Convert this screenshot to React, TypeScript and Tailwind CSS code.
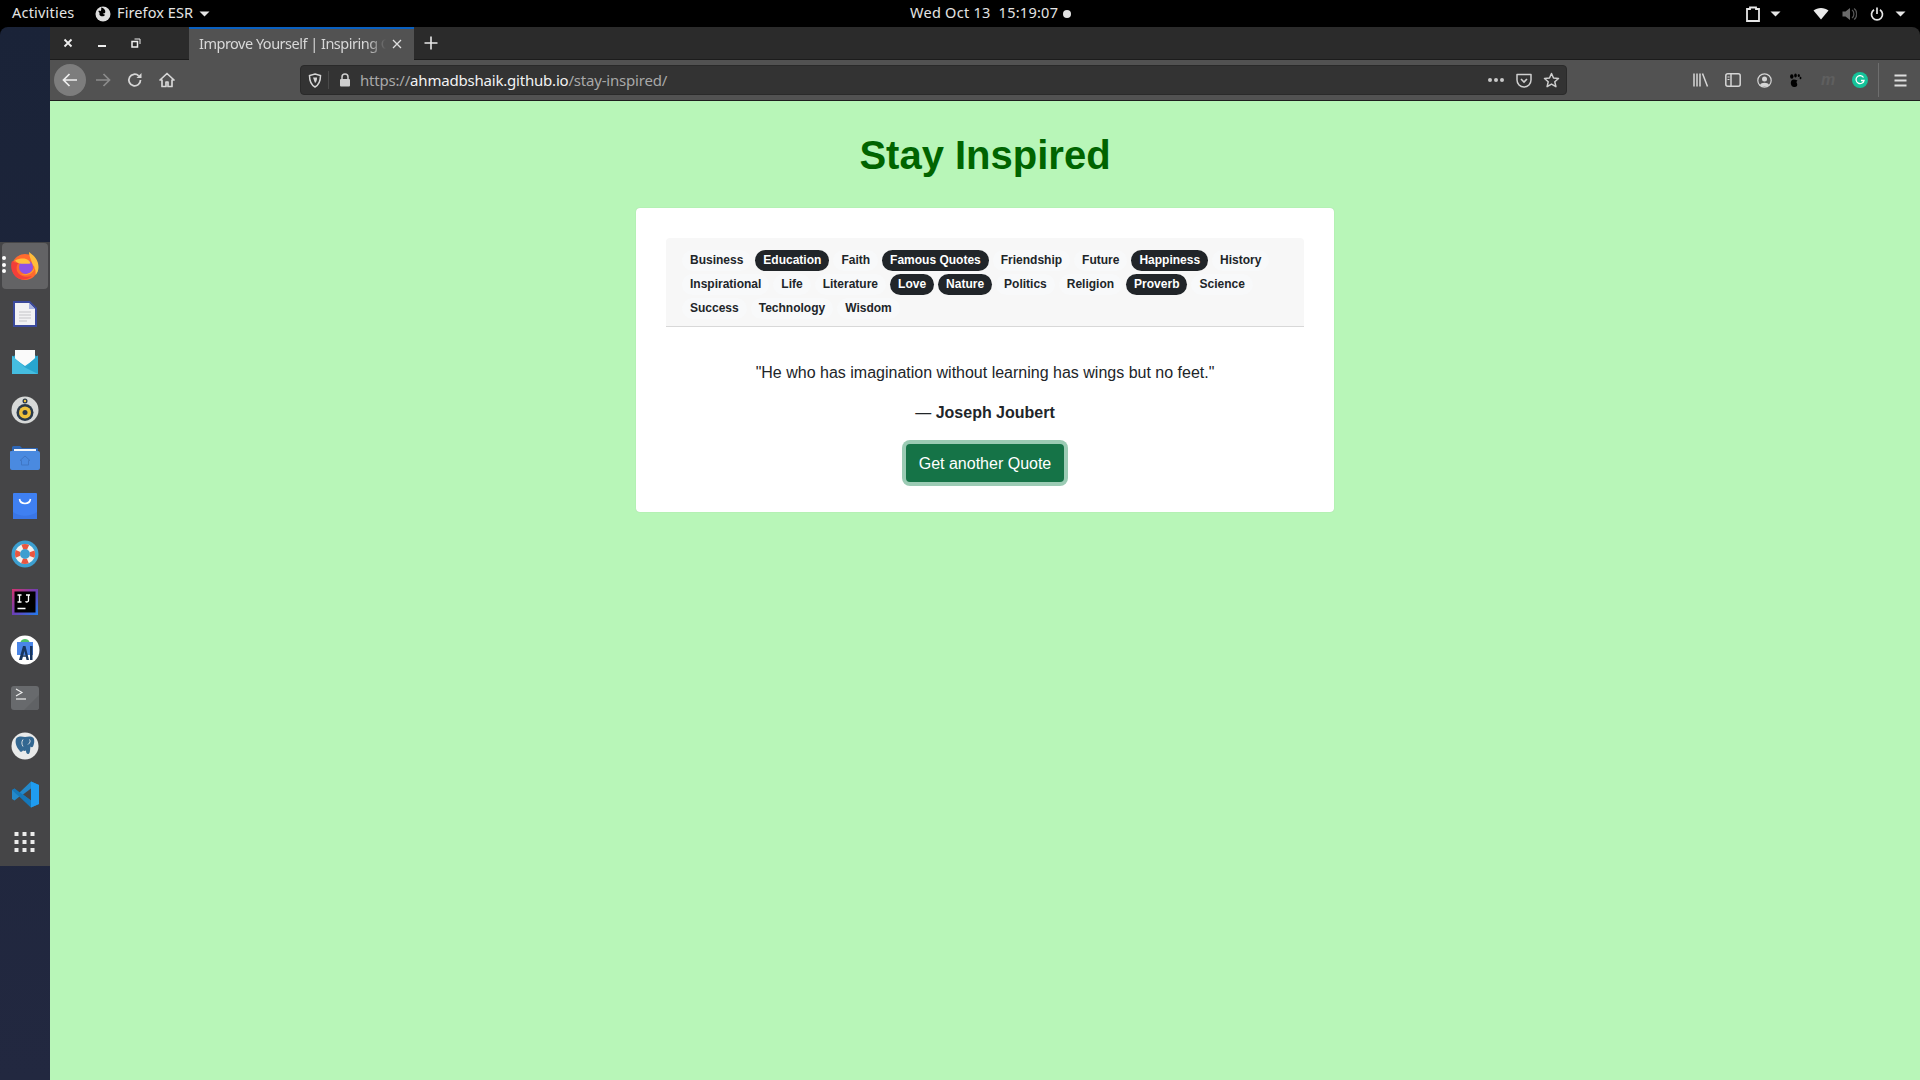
import React from "react";

const cats: [string, boolean][] = [
  ["Business", false], ["Education", true], ["Faith", false], ["Famous Quotes", true], ["Friendship", false], ["Future", false], ["Happiness", true], ["History", false],
  ["Inspirational", false], ["Life", false], ["Literature", false], ["Love", true], ["Nature", true], ["Politics", false], ["Religion", false], ["Proverb", true], ["Science", false],
  ["Success", false], ["Technology", false], ["Wisdom", false],
];

const Caret = () => (
  <svg width="11" height="6" viewBox="0 0 11 6"><path d="M0.5 0.5h10L5.5 5.5z" fill="#e6e6e6" /></svg>
);

function TopBar() {
  return (
    <div className="h-[27px] bg-black flex items-center text-[#e4e4e4] text-[14.5px] relative font-['Noto_Sans',sans-serif] tracking-[0.1px]">
      <span className="ml-3 w-[83px] pb-[1px] tracking-[0.2px]">Activities</span>
      <svg width="16" height="16" viewBox="0 0 16 16" className="mr-[6px]">
        <circle cx="8" cy="8" r="7.5" fill="#dedede" />
        <path d="M6 1.5c3 .5 4.5 2.4 4.3 4.4-.2 1.5-1.3 1.6-2.6 1.6 1 .8 1.6 1.2 2.3 1.2-.6 1.4-2.2 2-3.6 1.5C4.600 10 4 8.500 4.600 7 4 6.500 3.500 5.800 3.300 5c1-.2 1.800-.2 2.400.2C6.300 3.800 6.500 2.500 6 1.500z" fill="#000" />
      </svg>
      <span className="pb-[1px]">Firefox ESR</span>
      <span className="ml-[6px] flex"><Caret /></span>
      <div className="absolute left-[910px] top-0 h-[27px] flex items-center">
        <span className="whitespace-pre tracking-[0.26px] pb-[1px]">Wed Oct 13  15:19:07</span>
        <span className="ml-[5px] w-[8px] h-[8px] rounded-full bg-[#e4e4e4]" />
      </div>
      <div className="ml-auto flex items-center">
        <svg width="14" height="16" viewBox="0 0 14 16" className="mr-[10px]"><path d="M1 3h3V1.500h6V3h3v12H1z" fill="none" stroke="#e6e6e6" strokeWidth="1.800" /></svg>
        <Caret />
        <svg width="16" height="13" viewBox="0 0 16 13" className="ml-[32px]"><path d="M0.500 3.500C4.500 0 11.500 0 15.500 3.500L8 12.500z" fill="#eaeaea" /></svg>
        <svg width="15" height="14" viewBox="0 0 15 14" className="ml-[13px]"><path d="M0.500 4.500h3L8 1v12L3.500 9.500h-3z" fill="#6a6a6a" /><path d="M10 3c2.500 1.500 2.500 6.500 0 8M12 1.500c3.500 2 3.500 9 0 11" fill="none" stroke="#555" strokeWidth="1.300" /></svg>
        <svg width="14" height="14" viewBox="0 0 14 14" className="ml-[13px]"><path d="M4 2.800a5.500 5.500 0 1 0 6 0" fill="none" stroke="#e6e6e6" strokeWidth="1.700" /><path d="M7 0.500v6.500" stroke="#e6e6e6" strokeWidth="1.700" /></svg>
        <span className="ml-[11px] mr-[14px] flex"><Caret /></span>
      </div>
    </div>
  );
}

function DockItem({ children, active }: { children: React.ReactNode; active?: boolean }) {
  return (
    <div className={`w-[46px] h-[46px] mx-[2px] my-[1px] rounded-[4px] flex items-center justify-center relative shrink-0 ${active ? "bg-[#636365]" : ""}`}>
      {children}
    </div>
  );
}

function Dock() {
  return (
    <div className="w-[50px] shrink-0 bg-[#1b2238] rounded-tl-[8px] bg-gradient-to-b from-[#1a2338] to-[#222840] pt-[215px]">
      <div className="bg-[#454547] h-[624px] flex flex-col overflow-hidden">
        <DockItem active>
          <div className="absolute left-[0px] top-[13px] flex flex-col gap-[2.500px]">
            <span className="w-[4px] h-[4px] rounded-full bg-white" />
            <span className="w-[4px] h-[4px] rounded-full bg-white" />
            <span className="w-[4px] h-[4px] rounded-full bg-white" />
          </div>
          <svg width="28" height="28" viewBox="0 0 28 28">
            <circle cx="14" cy="15" r="13" fill="#ff6a2e" />
            <path d="M18 0c5 3.500 9.500 8 9.500 15 0 3-1 6-3 8 .5-4-.5-8-3-10.500C20.500 8 18 5 18 0z" fill="#ffbd3c" />
            <path d="M1 9c-2 5-.5 11 3 15 4 4 12 5 17 0-6 2-13 0-15-5-1-4 0-7 2-8-3 0-5-1-7-2z" fill="#f23f3a" />
            <circle cx="15" cy="15" r="7" fill="#8f52e6" />
            <path d="M4 8.500c4-2 8-2.500 11-1.500 2.500.8 4 2.500 4.500 4.500-3 .5-6 .2-9 .2-3 0-5-1.200-6.500-3.200z" fill="#ffc13c" />
            <path d="M9 22c3 1.500 7 1.500 10 0 3-1.500 5-4.500 5-8-1.500 4-4 7-7.500 7.800-2.700.7-5.500.7-7.500.2z" fill="#ffa02e" />
          </svg>
        </DockItem>
        <DockItem>
          <svg width="24" height="26" viewBox="0 0 24 26">
            <path d="M0 0h17l7 7v19H0z" fill="#3b4a9c" />
            <path d="M2 2h14l6 6v16H2z" fill="#f2f2f4" />
            <path d="M16 2l6 6h-6z" fill="#a9b4e2" />
            <path d="M6 11h12M6 14h12M6 17h12M6 20h8" stroke="#c4c4c8" strokeWidth="1.200" />
          </svg>
        </DockItem>
        <DockItem>
          <svg width="26" height="24" viewBox="0 0 26 24">
            <path d="M0 7l13-7 13 7v17H0z" fill="#2ba8d2" />
            <path d="M3 0h20v9l-10 7L3 9z" fill="#fafafa" />
            <path d="M0 5.500l13 12 13-12V24H0z" fill="#45bde0" />
            <path d="M26 5.500V24L13 17.500z" fill="#28a6cf" />
          </svg>
        </DockItem>
        <DockItem>
          <svg width="28" height="28" viewBox="0 0 28 28">
            <circle cx="14" cy="14" r="13.500" fill="#d7d9d8" />
            <circle cx="14" cy="5" r="2.500" fill="#2b3a4a" />
            <circle cx="14" cy="5" r="1.200" fill="#f0c33c" />
            <circle cx="14" cy="16.500" r="8.500" fill="#2b3a4a" />
            <circle cx="14" cy="16.500" r="6" fill="#efc13a" />
            <circle cx="14" cy="16.500" r="2.500" fill="#2b3a4a" />
          </svg>
        </DockItem>
        <DockItem>
          <svg width="30" height="24" viewBox="0 0 30 24">
            <path d="M2 1.500a1.500 1.500 0 0 1 1.500-1.500H10l2 2h15a1 1 0 0 1 1 1v6H2z" fill="#2e66b5" />
            <path d="M4 3h22v5H4z" fill="#f4f6f9" />
            <path d="M1 5h27a2 2 0 0 1 2 2v15a2 2 0 0 1-2 2H2a2 2 0 0 1-2-2V6a1 1 0 0 1 1-1z" fill="#4a8ae0" />
            <path d="M15 10l5 4.500h-1.500V19h-7v-4.500H10z" fill="none" stroke="#3f76c4" strokeWidth="1" />
          </svg>
        </DockItem>
        <DockItem>
          <svg width="24" height="26" viewBox="0 0 24 26">
            <rect width="24" height="26" rx="1" fill="#3f80f2" />
            <path d="M0 19c8 5 16 5 24 0v7H0z" fill="#3a76e6" />
            <path d="M6.500 6c1 6 10 6 11 0" fill="none" stroke="#fff" strokeWidth="1.600" />
          </svg>
        </DockItem>
        <DockItem>
          <svg width="28" height="28" viewBox="0 0 28 28">
            <circle cx="14" cy="14" r="13.500" fill="#3d9fd0" />
            <circle cx="14" cy="14" r="7.500" fill="none" stroke="#f4f2ee" strokeWidth="5" />
            <circle cx="14" cy="14" r="7.500" fill="none" stroke="#e9563f" strokeWidth="5" strokeDasharray="5.900 5.900" strokeDashoffset="3" />
          </svg>
        </DockItem>
        <DockItem>
          <svg width="26" height="26" viewBox="0 0 26 26">
            <defs>
              <linearGradient id="ij" x1="0" y1="0" x2="1" y2="1">
                <stop offset="0" stopColor="#d6336c" />
                <stop offset="0.500" stopColor="#6b3fb5" />
                <stop offset="1" stopColor="#1f7ef0" />
              </linearGradient>
            </defs>
            <rect width="26" height="26" fill="url(#ij)" />
            <rect x="2.500" y="2.500" width="21" height="21" fill="#000" />
            <path d="M5.500 6h4M7.500 6v7M5.500 13h4M14 6h4M16.500 6v5.500c0 1.500-2 2-3 .8M5.500 19.500h8" fill="none" stroke="#fff" strokeWidth="1.300" />
          </svg>
        </DockItem>
        <DockItem>
          <svg width="30" height="30" viewBox="0 0 30 30">
            <circle cx="15" cy="15" r="14.500" fill="#fff" />
            <path d="M7 7h16v13H7z" fill="#4a86e8" />
            <path d="M10.500 7c1-4 8-4 9 0z" fill="#4fc26a" />
            <path d="M9 25l4-14h2.500l3.500 14h-2.500l-2-9-2.500 9zM20 11h2.500v14H20z" fill="#17355f" />
            <path d="M11.500 21h5.500" stroke="#17355f" strokeWidth="1.500" />
          </svg>
        </DockItem>
        <DockItem>
          <svg width="28" height="24" viewBox="0 0 28 24">
            <rect width="28" height="24" rx="3" fill="#686a6d" />
            <path d="M28 9v12a3 3 0 0 1-3 3H13z" fill="#606265" />
            <path d="M5 3l6 3.500-6 3.500" fill="none" stroke="#f0f0f0" strokeWidth="1.100" />
            <path d="M5 13h10" stroke="#f0f0f0" strokeWidth="1.200" />
          </svg>
        </DockItem>
        <DockItem>
          <svg width="28" height="28" viewBox="0 0 28 28">
            <circle cx="14" cy="14" r="13.500" fill="#e9eaea" />
            <path d="M5.500 6c3-2.500 6-1.500 8.500-1 2.500-.5 6-1.500 8.500 1 1.500 2.500.5 6.500-.5 8.500-.5 1-2 1-2.500 0-.5 2.500 0 6.500-2 7.500-1.500.5-2.500-1-2.500-3.500-1 .5-2 .5-3 0-1 1-2.500 2.500-3.500 0C5 15 3.500 9 5.500 6z" fill="#336791" />
            <path d="M12 7.500c-1.500 2-1.500 4.500 0 7M18.500 7.500c1 1.500 1 3-1.500 5" fill="none" stroke="#e9eaea" strokeWidth="0.900" />
          </svg>
        </DockItem>
        <DockItem>
          <svg width="27" height="27" viewBox="0 0 27 27">
            <path d="M19 0.500L27 4v19l-8 3.500L7.500 15.500 2.500 19.500 0 18V9l2.500-1.500 5 4z" fill="#2489ca" />
            <path d="M19 0.500L27 4v19l-8 3.500z" fill="#1f9cf0" />
            <path d="M19 7.500v12l-8-6z" fill="#454547" />
            <path d="M0 9l2.500-1.500L19 19.500v7L0 9z" fill="#1070b3" opacity="0.700" />
          </svg>
        </DockItem>
        <DockItem>
          <div className="grid grid-cols-3 gap-[4px] -translate-x-[0.5px]">
            {Array.from({ length: 9 }).map((_, i) => (
              <span key={i} className="w-[4px] h-[4px] bg-[#ececec]" />
            ))}
          </div>
        </DockItem>
      </div>
    </div>
  );
}

function TabBar() {
  return (
    <div className="h-[33px] bg-[#2b2b2b] rounded-tr-[8px] flex items-stretch border-b border-[#1c1c1c] font-['Noto_Sans',sans-serif]">
      <div className="w-[139px] flex items-center text-[#eee] shrink-0">
        <svg width="10" height="10" viewBox="0 0 10 10" className="ml-[13px]"><path d="M1.500 1.500l7 7M8.500 1.500l-7 7" stroke="#eee" strokeWidth="1.800" /></svg>
        <svg width="8" height="10" viewBox="0 0 8 10" className="ml-[25px]"><path d="M0 8h8" stroke="#eee" strokeWidth="2" /></svg>
        <svg width="10" height="10" viewBox="0 0 10 10" className="ml-[25px]"><path d="M1 3.500h5.500V9H1z" fill="none" stroke="#eee" strokeWidth="1.500" /><path d="M3.500 1h5.500v5" fill="none" stroke="#eee" strokeWidth="1" /></svg>
      </div>
      <div className="w-[225px] bg-[#525252] border-t-2 border-[#0a60c0] flex items-center relative shrink-0 -mb-[1px]">
        <span className="ml-[10px] w-[187px] pb-[2px] overflow-hidden whitespace-nowrap text-[14.500px] text-[#d8d8d8] tracking-[-0.5px] [mask-image:linear-gradient(to_right,black_168px,transparent_187px)]">Improve Yourself | Inspiring Quotes</span>
        <svg width="10" height="10" viewBox="0 0 10 10" className="ml-[6px] mb-[1px]"><path d="M1 1l8 8M9 1l-8 8" stroke="#e0e0e0" strokeWidth="1.300" /></svg>
      </div>
      <div className="flex items-center ml-[10px]">
        <svg width="14" height="14" viewBox="0 0 14 14"><path d="M7 0.500v13M0.500 7h13" stroke="#e8e8e8" strokeWidth="1.600" /></svg>
      </div>
    </div>
  );
}

function ToolBar() {
  const c = "#d6d6d6";
  return (
    <div className="h-[40px] bg-[#525252] flex items-center border-b border-[#1e1e1e] box-content font-['Noto_Sans',sans-serif]">
      <div className="w-[32px] h-[32px] ml-[4px] rounded-full bg-[#7d7d7d] flex items-center justify-center shrink-0">
        <svg width="16" height="14" viewBox="0 0 16 14"><path d="M15 7H2M7.500 1L1.500 7l6 6" fill="none" stroke="#eee" strokeWidth="1.700" /></svg>
      </div>
      <svg width="16" height="14" viewBox="0 0 16 14" className="ml-[9px] shrink-0"><path d="M1 7h13M8.500 1l6 6-6 6" fill="none" stroke="#8c8c8c" strokeWidth="1.700" /></svg>
      <svg width="16" height="16" viewBox="0 0 16 16" className="ml-[16px] shrink-0"><path d="M13.500 8a5.800 5.800 0 1 1-1.800-4.200" fill="none" stroke={c} strokeWidth="1.800" /><path d="M14.500 1v5h-5z" fill={c} /></svg>
      <svg width="16" height="16" viewBox="0 0 16 16" className="ml-[16px] shrink-0"><path d="M8 1.500L1 8h2v6.500h4V10h2v4.500h4V8h2z" fill="none" stroke={c} strokeWidth="1.700" strokeLinejoin="round" /></svg>
      <div className="ml-[125px] w-[1267px] h-[30px] bg-[#333333] border border-[#2a2a2a] rounded-[4px] flex items-center shrink-0">
        <svg width="14" height="15" viewBox="0 0 14 15" className="ml-[7px] shrink-0"><path d="M7 1l5.500 1.500c0 5-1 9-5.500 11.500C2.500 11.500 1.500 7.500 1.500 2.500z" fill="none" stroke={c} strokeWidth="1.500" /><path d="M5 4.500h4c0 3-.6 4.500-2 5.500z" fill={c} /></svg>
        <span className="w-[1px] h-[18px] bg-[#4a4a4a] ml-[6px]" />
        <svg width="12" height="14" viewBox="0 0 12 14" className="ml-[10px] shrink-0"><path d="M3 6V4a3 3 0 0 1 6 0v2" fill="none" stroke="#cfcfcf" strokeWidth="1.500" /><rect x="1" y="6" width="10" height="7.500" rx="1" fill="#cfcfcf" /></svg>
        <span className="ml-[9px] text-[15px] tracking-[-0.2px] whitespace-nowrap text-[#a8a8a8]">https://<span className="text-[#f2f2f2]">ahmadbshaik.github.io</span>/stay-inspired/</span>
        <div className="ml-auto flex items-center shrink-0">
          <div className="flex gap-[2px] mr-[12px]">
            <span className="w-[4px] h-[4px] rounded-full bg-[#c8c8c8]" />
            <span className="w-[4px] h-[4px] rounded-full bg-[#c8c8c8]" />
            <span className="w-[4px] h-[4px] rounded-full bg-[#c8c8c8]" />
          </div>
          <svg width="16" height="15" viewBox="0 0 16 15" className="mr-[11px]"><path d="M1 1.500h14v5.500a7 7 0 0 1-14 0z" fill="none" stroke="#cfcfcf" strokeWidth="1.500" strokeLinejoin="round" /><path d="M5 6l3 3 3-3" fill="none" stroke="#cfcfcf" strokeWidth="1.600" /></svg>
          <svg width="17" height="16" viewBox="0 0 17 16" className="mr-[6px]"><path d="M8.500 1.500l2 4.500 5 .5-3.700 3.300 1.100 4.900-4.400-2.600-4.400 2.600 1.100-4.900L1.500 6.500l5-.5z" fill="none" stroke="#cfcfcf" strokeWidth="1.500" strokeLinejoin="round" /></svg>
        </div>
      </div>
      <div className="ml-auto flex items-center shrink-0">
        <svg width="16" height="14" viewBox="0 0 16 14"><path d="M1 0.500v13M4 0.500v13M7 0.500v13M9.500 0.500l5 13" fill="none" stroke={c} strokeWidth="1.500" /></svg>
        <svg width="16" height="14" viewBox="0 0 16 14" className="ml-[16px]"><rect x="0.800" y="0.800" width="14.400" height="12.400" rx="2" fill="none" stroke={c} strokeWidth="1.500" /><path d="M6 1v12" stroke={c} strokeWidth="1.500" /><path d="M2.500 4h2M2.500 6.500h2" stroke={c} strokeWidth="1.200" /></svg>
        <svg width="15" height="15" viewBox="0 0 15 15" className="ml-[16px]"><circle cx="7.500" cy="7.500" r="6.700" fill="none" stroke={c} strokeWidth="1.200" /><circle cx="7.500" cy="6" r="2.500" fill={c} /><path d="M3 12c1-3 8-3 9 0-2 2-7 2-9 0z" fill={c} /></svg>
        <svg width="13" height="15" viewBox="0 0 13 15" className="ml-[17px]"><path d="M2.500 7.500C1 10 2 13.500 5 14c2.500.4 4-1.500 3-3.500-.8-1.500-.5-2 .5-3C6 6.500 3.500 6 2.500 7.500z" fill="#000" /><ellipse cx="2.800" cy="3.500" rx="1.700" ry="2.300" fill="#000" /><ellipse cx="6.500" cy="2.500" rx="1.300" ry="1.900" fill="#000" /><ellipse cx="9.800" cy="2.500" rx="1.100" ry="1.500" fill="#000" /><ellipse cx="11.500" cy="5" rx="0.900" ry="1.200" fill="#000" /></svg>
        <span className="ml-[19px] w-[14px] text-[16px] leading-none italic font-bold text-[#5f5f5f] font-['Liberation_Sans',sans-serif]">m</span>
        <div className="ml-[17px] w-[16px] h-[16px] rounded-full bg-[#15c39a] flex items-center justify-center">
          <svg width="10" height="10" viewBox="0 0 10 10"><path d="M8.500 2.500A4 4 0 1 0 9 5.500H6" fill="none" stroke="#fff" strokeWidth="1.300" /></svg>
        </div>
        <span className="ml-[10px] w-[1px] h-[34px] bg-[#6e6e6e]" />
        <svg width="13" height="13" viewBox="0 0 13 13" className="ml-[15px] mr-[13px]"><path d="M0.500 1.500h12M0.500 6.500h12M0.500 11.500h12" stroke="#dedede" strokeWidth="1.800" /></svg>
      </div>
    </div>
  );
}

function Page() {
  return (
    <div className="flex-1 bg-[#b8f6b8] pt-[30px] flex flex-col items-center font-['Liberation_Sans',sans-serif]">
      <h1 className="text-[40px] leading-[48px] font-bold text-[#006400] m-0">Stay Inspired</h1>
      <div className="w-[698px] mt-[29px] bg-white rounded-[4px] shadow-[0_0_1px_rgba(0,0,0,0.2)] p-[30px] text-[#212529]">
        <div className="bg-[#f7f7f7] border-b border-[#d8d8d8] rounded-t-[4px] pl-[16px] pr-[14px] pt-[12px] pb-[7px] flex flex-wrap gap-x-[4px] gap-y-[3px]">
          {cats.map(([name, on]) => (
            <span
              key={name}
              className={`h-[21px] px-[8px] rounded-full text-[12px] leading-[21px] font-bold whitespace-nowrap ${on ? "bg-[#212529] text-white" : "bg-[#f8f9fa] text-[#212529]"}`}
            >
              {name}
            </span>
          ))}
        </div>
        <p className="mt-[34px] text-[16px] leading-[24px] text-center">"He who has imagination without learning has wings but no feet."</p>
        <p className="mt-[16px] text-[16px] leading-[24px] text-center">— <b>Joseph Joubert</b></p>
        <div className="mt-[19px] flex justify-center">
          <button className="h-[38px] px-[13px] pt-[1px] rounded-[4px] bg-[#157347] text-white text-[16px] shadow-[0_0_0_4px_#9bcbb4]">Get another Quote</button>
        </div>
      </div>
    </div>
  );
}

export default function App() {
  return (
    <div className="w-[1920px] h-[1080px] bg-black flex flex-col overflow-hidden">
      <TopBar />
      <div className="flex flex-1 min-h-0">
        <Dock />
        <div className="flex-1 flex flex-col min-w-0">
          <TabBar />
          <ToolBar />
          <Page />
        </div>
      </div>
    </div>
  );
}
